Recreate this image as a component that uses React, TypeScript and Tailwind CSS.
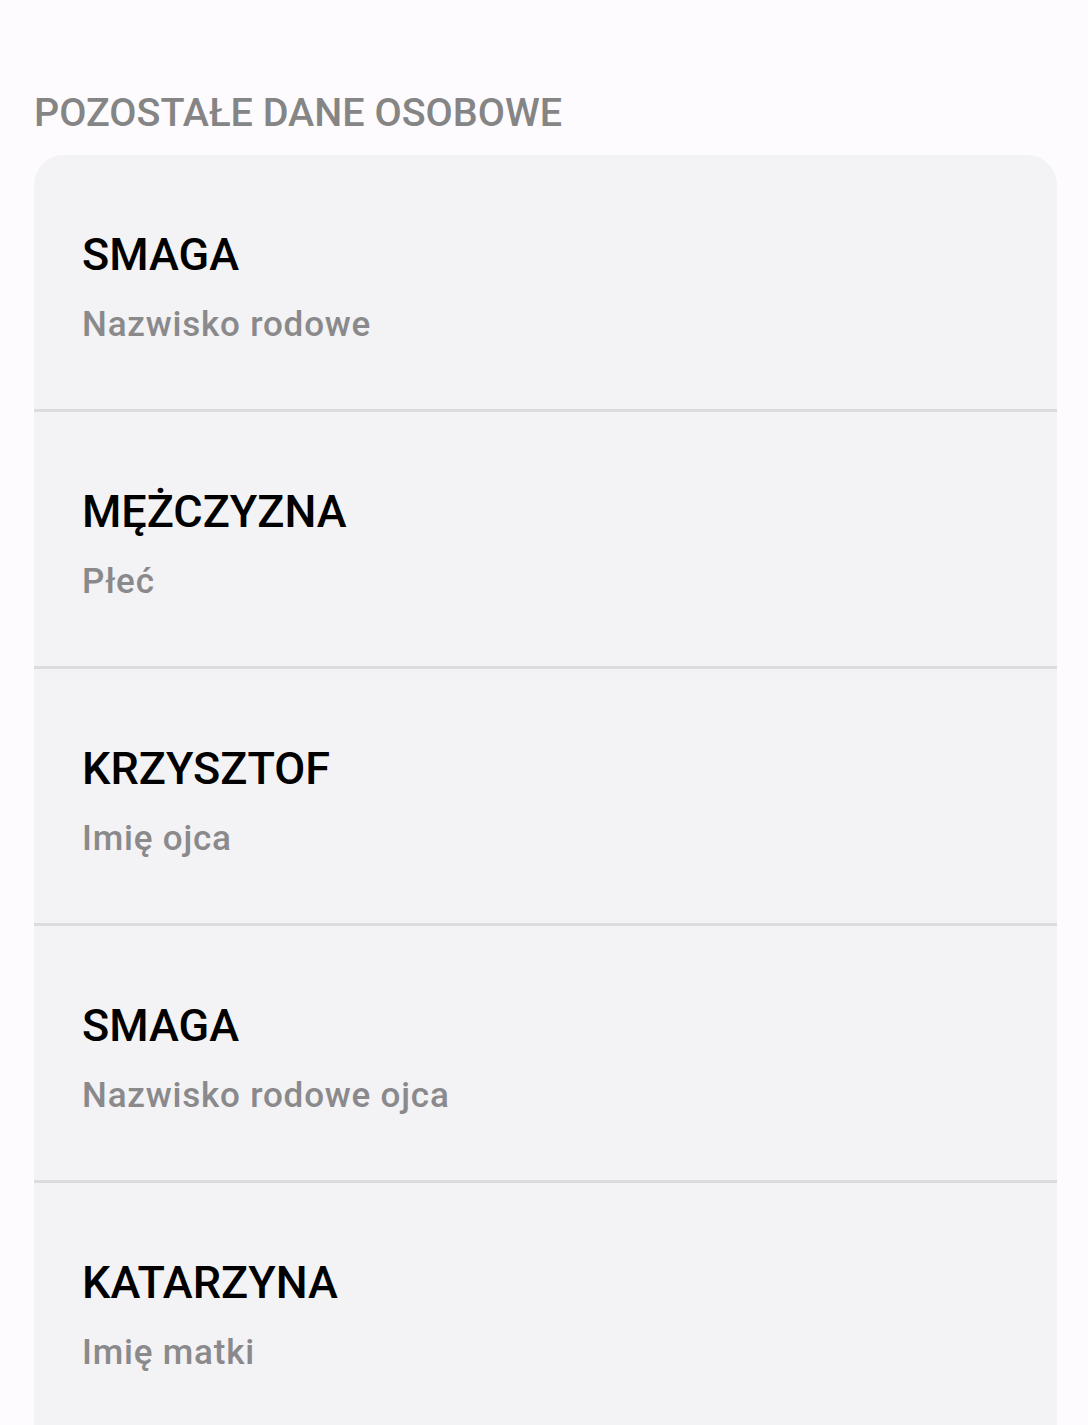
const rows = [
  { value: "SMAGA", label: "Nazwisko rodowe" },
  { value: "MĘŻCZYZNA", label: "Płeć" },
  { value: "KRZYSZTOF", label: "Imię ojca" },
  { value: "SMAGA", label: "Nazwisko rodowe ojca" },
  { value: "KATARZYNA", label: "Imię matki" },
];

const App = () => {
  return (
    <div className="min-h-[1425px] bg-[#fdfbfd] font-['Roboto',sans-serif] pt-[93px] overflow-hidden">
      <h2 className="ml-[34px] text-[39.5px] leading-[40px] font-medium text-[#858585]">
        POZOSTAŁE DANE OSOBOWE
      </h2>
      <div className="mt-[22px] ml-[34px] w-[1023px] rounded-t-[30px] bg-[#f3f2f4]">
        {rows.map((row, i) => (
          <div
            key={i}
            className="h-[257px] border-b-[3px] border-[#dcdbdd] pl-[48px] pt-[77px]"
          >
            <div className="text-[45px] leading-[45px] font-medium text-black">
              {row.value}
            </div>
            <div className="mt-[30px] text-[35px] leading-[35px] tracking-[0.8px] font-medium text-[#8a898b]">
              {row.label}
            </div>
          </div>
        ))}
      </div>
    </div>
  );
};

export default App;
